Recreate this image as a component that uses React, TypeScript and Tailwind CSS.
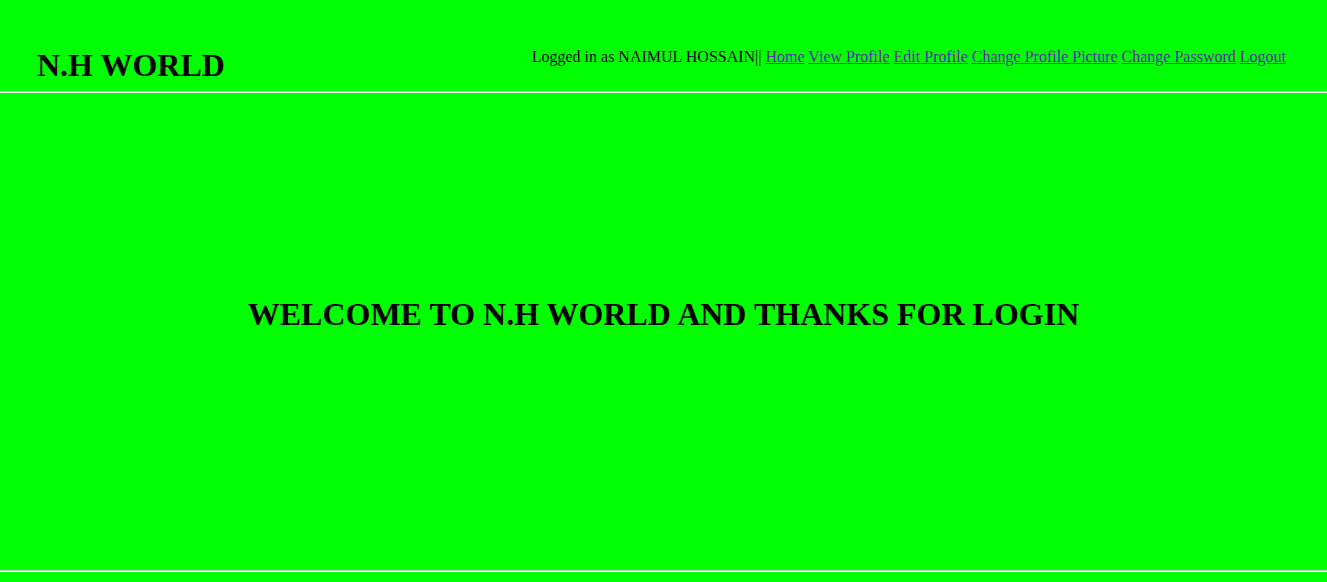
import React from "react";

export default function App() {
  const links = ["Home", "View Profile", "Edit Profile", "Change Profile Picture", "Change Password", "Logout"];
  return (
    <div className="min-h-[582px] w-full bg-[#00ff00] text-black font-['Liberation_Serif',serif]">
      <div className="flex h-[91px] items-start justify-between pl-[37px] pr-[41px] pt-[47px]">
        <h1 className="text-[32px] font-bold leading-[37px]">N.H WORLD</h1>
        <div className="text-[16px] leading-[18px] mt-[1px]">
          Logged in as NAIMUL HOSSAIN||
          {links.map((l) => (
            <React.Fragment key={l}>
              {" "}
              <a href="#" className="text-[#5a2aa8] underline">{l}</a>
            </React.Fragment>
          ))}
        </div>
      </div>
      <div className="h-[2px] border-t border-t-[#c8c8c8] border-b border-b-white" />
      <div className="flex h-[477px] justify-center pt-[203px]">
        <h2 className="text-[32px] font-bold leading-[37px]">WELCOME TO N.H WORLD AND THANKS FOR LOGIN</h2>
      </div>
      <div className="h-[2px] border-t border-t-[#c8c8c8] border-b border-b-white" />
    </div>
  );
}
